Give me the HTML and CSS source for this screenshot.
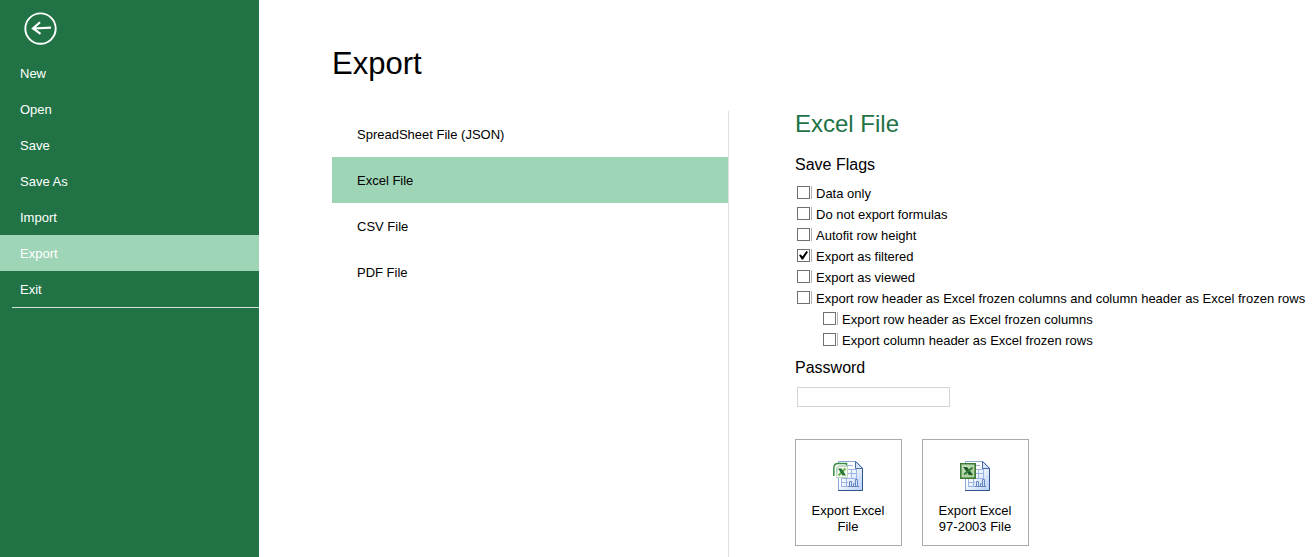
FILE: index.html
```html
<!DOCTYPE html>
<html lang="en">
<head>
<meta charset="utf-8">
<title>Export</title>
<link rel="stylesheet" href="styles.css">
</head>
<body>
<svg class="defs" aria-hidden="true">
  <defs>
    <linearGradient id="paper" x1="0" y1="0" x2="1" y2="1">
      <stop offset="0.35" stop-color="#ffffff"/>
      <stop offset="1" stop-color="#b4cdf6"/>
    </linearGradient>
    <linearGradient id="badge" x1="0" y1="0" x2="1" y2="1">
      <stop offset="0" stop-color="#e6f2e0"/>
      <stop offset="1" stop-color="#7fb573"/>
    </linearGradient>
    <g id="sheet">
      <path d="M5.500 .5H23L29.500 7V29.500H5.500Z" fill="url(#paper)" stroke="#8ca9d6"/>
      <path d="M29.500 7V29.500H5" fill="none" stroke="#31558f"/>
      <path d="M22.500 .5V7.500H29.500Z" fill="#d9e6fb" stroke="#4a6ca6"/>
      <path d="M14 4.500H20M15 8.500H24M15 12.500H24M8 17.500H24M8 21.500H15M8 25.500H15M8.500 17V26M13.500 17V26M18.500 8V17M23.500 8V17" fill="none" stroke="#9bb6e2"/>
      <path d="M15 25.500H26M16.500 25V20.500H18.500V25M20.500 25V22.500H21.500M22.500 25V18.500H24.500V25" fill="none" stroke="#6685be"/>
    </g>
  </defs>
</svg>
<div class="app">
  <nav class="sidebar">
    <button class="back" type="button" aria-label="Back">
      <svg viewBox="0 0 34 34" width="34" height="34" fill="none" stroke="#fff" stroke-width="2">
        <circle cx="16.500" cy="16.600" r="15.200" stroke-width="1.900"/>
        <path d="M27 15.600L9.500 16.500M16 10.200L9 16.500L16.500 21.800" stroke-width="2.200"/>
      </svg>
    </button>
    <button class="menu-item" type="button">New</button>
    <button class="menu-item" type="button">Open</button>
    <button class="menu-item" type="button">Save</button>
    <button class="menu-item" type="button">Save As</button>
    <button class="menu-item" type="button">Import</button>
    <button class="menu-item active" type="button">Export</button>
    <button class="menu-item" type="button">Exit</button>
    <hr class="menu-rule">
  </nav>
  <main class="main">
    <h1 class="title">Export</h1>
    <div class="columns">
      <div class="formats">
        <button class="format" type="button">SpreadSheet File (JSON)</button>
        <button class="format selected" type="button">Excel File</button>
        <button class="format" type="button">CSV File</button>
        <button class="format" type="button">PDF File</button>
      </div>
      <section class="details">
        <h2 class="details-title">Excel File</h2>
        <h3 class="group-title">Save Flags</h3>
        <div class="flags">
          <label class="flag"><input class="check" type="checkbox">Data only</label>
          <label class="flag"><input class="check" type="checkbox">Do not export formulas</label>
          <label class="flag"><input class="check" type="checkbox">Autofit row height</label>
          <label class="flag"><input class="check" type="checkbox" checked>Export as filtered</label>
          <label class="flag"><input class="check" type="checkbox">Export as viewed</label>
          <label class="flag"><input class="check" type="checkbox">Export row header as Excel frozen columns and column header as Excel frozen rows</label>
          <label class="flag nested"><input class="check" type="checkbox">Export row header as Excel frozen columns</label>
          <label class="flag nested"><input class="check" type="checkbox">Export column header as Excel frozen rows</label>
        </div>
        <label class="group-title" for="password">Password</label>
        <input class="password" id="password" type="password">
        <div class="actions">
          <button class="action" type="button">
            <svg viewBox="0 0 30 30" width="30" height="30">
              <use href="#sheet"/>
              <path d="M1 15V6L4 2H14V15Z" fill="#fff"/>
              <path d="M.8 15V7Q1 2.500 5 2.500H13.500V4.500" fill="none" stroke="#368b42" stroke-width="1.500"/>
              <path d="M3.500 15V7.500Q3.500 5 6 5H13" fill="none" stroke="#8fcb92"/>
              <path d="M4.500 5.500H14.500V16.500H3.500Z" fill="#f5faf2" stroke="#c4d5bf"/>
              <path d="M12.500 7.500L5.500 14.500" stroke="#68b34a" stroke-width="2"/>
              <path d="M5 7.500H8.500L13 14.500H9.500Z" fill="#267532"/>
            </svg>
            <span>Export Excel File</span>
          </button>
          <button class="action" type="button">
            <svg viewBox="0 0 30 30" width="30" height="30">
              <use href="#sheet"/>
              <path d="M.8 2.800H15.200V17.200H.8Z" fill="url(#badge)" stroke="#3c7a36" stroke-width="1.600"/>
              <path d="M2.500 4.500H13.500V15.500H2.500Z" fill="none" stroke="#b5d6aa"/>
              <path d="M3 6H7L13 14H9Z" fill="#1d5a29"/>
              <path d="M12.500 6.500L4 13.500" stroke="#347d37" stroke-width="2"/>
            </svg>
            <span>Export Excel 97-2003 File</span>
          </button>
        </div>
      </section>
    </div>
  </main>
</div>
</body>
</html>
```
FILE: styles.css
```css
* { box-sizing: border-box; }

body {
  margin: 0;
  background: #fff;
  color: #000;
  font: 13px/16px "Liberation Sans", Arial, sans-serif;
}

button {
  border: 0;
  background: none;
  color: inherit;
  font: inherit;
  cursor: pointer;
}

h1, h2, h3 { margin: 0; font-weight: normal; }

.defs { position: absolute; width: 0; height: 0; }

.app { display: flex; min-height: 100vh; }

.sidebar {
  flex: 0 0 259px;
  display: flex;
  flex-direction: column;
  background: #217346;
  color: #fff;
}

.back {
  align-self: flex-start;
  margin: 12px 0 9px 24px;
  padding: 0;
  height: 34px;
}

.back svg, .action svg { display: block; }

.menu-item {
  height: 36px;
  padding: 2px 20px 0;
  text-align: left;
}

.menu-item.active { background: #9fd5b7; }

.menu-rule {
  width: auto;
  margin: 0 0 0 12px;
  border: 0;
  border-top: 1px solid #d3e3da;
}

.main {
  flex: 1;
  min-width: 0;
  display: flex;
  flex-direction: column;
  padding: 45px 0 0 73px;
}

.title {
  margin-bottom: 28px;
  font-size: 31px;
  line-height: 38px;
}

.columns { flex: 1; display: flex; }

.formats {
  flex: 0 0 397px;
  display: flex;
  flex-direction: column;
  border-right: 1px solid #e1e1e1;
}

.format {
  height: 46px;
  padding: 2px 25px 0;
  text-align: left;
}

.format.selected { background: #9fd5b7; }

.details {
  flex: 1;
  min-width: 0;
  padding: 0 0 11px 66px;
}

.details-title {
  margin-bottom: 19px;
  color: #217346;
  font-size: 24px;
  line-height: 26px;
}

.group-title {
  display: block;
  font-size: 16px;
  line-height: 18px;
}

.flags {
  display: flex;
  flex-direction: column;
  padding: 9px 0 8px;
}

.flag {
  display: flex;
  align-items: center;
  gap: 6px;
  height: 21px;
  padding-left: 2px;
  white-space: nowrap;
}

.flag.nested { padding-left: 28px; }

.check {
  appearance: none;
  display: grid;
  place-items: center;
  flex: none;
  width: 13px;
  height: 13px;
  margin: 0 0 2px;
  border: 1px solid #707070;
  background: #fff;
  box-shadow: 1px 0 #fff, 2px 0 #b5b5b5;
}

.check:checked::before {
  content: "";
  width: 9px;
  height: 9px;
  background: #000;
  clip-path: polygon(0 45%, 20% 38%, 38% 62%, 82% 0, 100% 10%, 45% 95%, 30% 95%);
}

.password {
  display: block;
  width: 153px;
  height: 20px;
  margin: 10px 2px 32px;
  padding: 1px 4px;
  border: 1px solid #d4d4d4;
  font: inherit;
}

.actions { display: flex; gap: 20px; }

.action {
  display: flex;
  flex-direction: column;
  align-items: center;
  gap: 12px;
  width: 107px;
  height: 107px;
  padding: 21px 13px 0 12px;
  border: 1px solid #ababab;
}
```
